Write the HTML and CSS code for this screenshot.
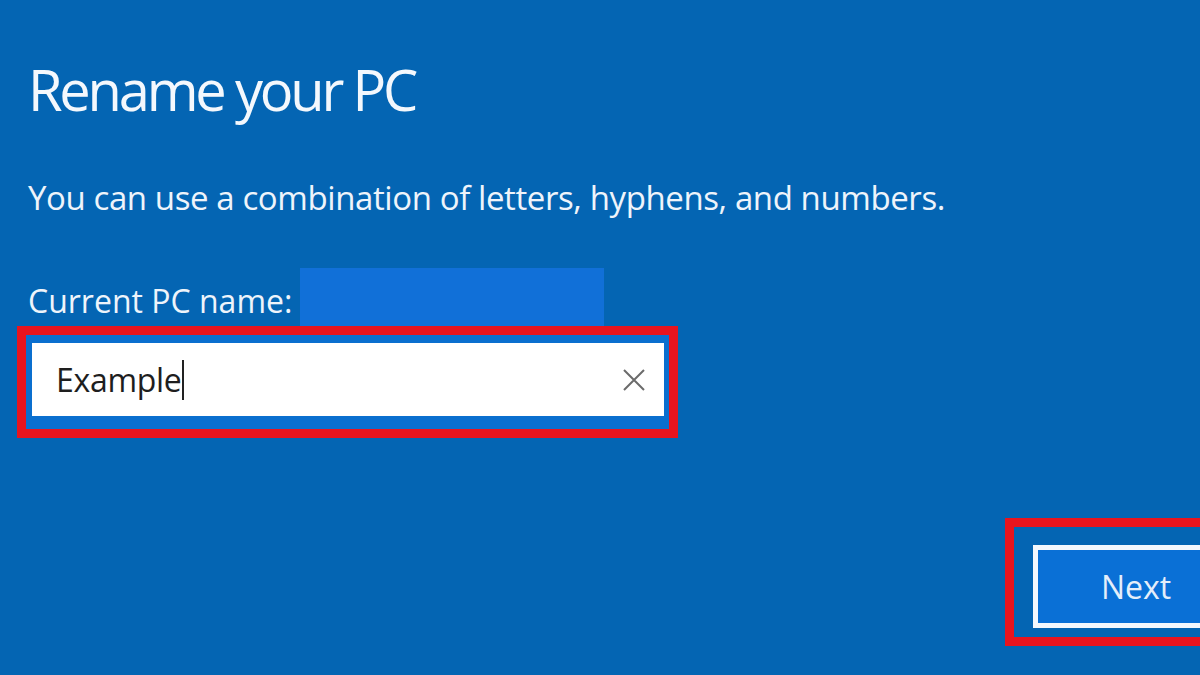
FILE: index.html
```html
<!DOCTYPE html>
<html>
<head>
<meta charset="utf-8">
<link rel="stylesheet" href="styles.css">
</head>
<body>
<div class="page">
  <h1 class="title">Rename your PC</h1>
  <p class="hint">You can use a combination of letters, hyphens, and numbers.</p>
  <div class="current-row">
    <span class="current-label">Current PC name:</span>
    <span class="current-value"></span>
  </div>
  <div class="field-frame">
    <div class="field-inner">
      <div class="field">
        <span class="field-text">Example</span><span class="caret"></span>
        <svg class="clear" viewBox="0 0 24 24" width="24" height="24"><path d="M2 2 L22 22 M22 2 L2 22" stroke="#6b6b6b" stroke-width="2" fill="none"/></svg>
      </div>
    </div>
  </div>
  <div class="footer">
    <div class="next-frame">
      <div class="next-btn">Next</div>
    </div>
  </div>
</div>
</body>
</html>
```

FILE: styles.css
```css
html, body {
  margin: 0;
  padding: 0;
  background: #0465b3;
  overflow: hidden;
}
.page {
  width: 1200px;
  height: 675px;
  font-family: "Open Sans", "Noto Sans", sans-serif;
  color: #eef4fb;
  padding-left: 28px;
  box-sizing: border-box;
  position: relative;
}
.title {
  margin: 0;
  padding-top: 57px;
  font-weight: 400;
  font-size: 56px;
  line-height: 64px;
  letter-spacing: -3.2px;
  color: #f4f8fd;
}
.hint {
  margin: 57px 0 0 0;
  font-size: 33px;
  line-height: 40px;
  letter-spacing: -0.4px;
}
.current-row {
  margin-top: 50px;
  display: flex;
  align-items: flex-end;
  height: 58px;
}
.current-label {
  font-size: 32px;
  line-height: 40px;
  padding-bottom: 5px;
}
.current-value {
  display: inline-block;
  width: 304px;
  height: 58px;
  margin-left: 8px;
  background: #1170d8;
}
.field-frame {
  margin-left: -11px;
  width: 661px;
  height: 112px;
  border: 9px solid #e8141e;
  box-sizing: border-box;
}
.field-inner {
  height: 100%;
  padding: 8px 5px 13px 6px;
  box-sizing: border-box;
  background: #0a6fcf;
}
.field {
  height: 100%;
  background: #ffffff;
  display: flex;
  align-items: center;
  padding-left: 24px;
  padding-right: 18px;
  box-sizing: border-box;
}
.field-text {
  color: #1e1e1e;
  font-size: 32px;
  line-height: 40px;
  letter-spacing: -0.3px;
}
.caret {
  display: inline-block;
  width: 2px;
  height: 40px;
  background: #222;
  margin-left: 1px;
}
.clear {
  margin-left: auto;
}
.footer {
  display: flex;
  justify-content: flex-end;
  margin-top: 80px;
  margin-right: -60px;
}
.next-frame {
  width: 255px;
  height: 128px;
  border: 9px solid #e8141e;
  box-sizing: border-box;
  padding: 18px 0 0 19px;
}
.next-btn {
  height: 83px;
  border: 5px solid #f4f8fd;
  background: #0a70d6;
  box-sizing: border-box;
  font-size: 32px;
  line-height: 73px;
  padding-left: 63px;
  color: #e4eefa;
}
```
